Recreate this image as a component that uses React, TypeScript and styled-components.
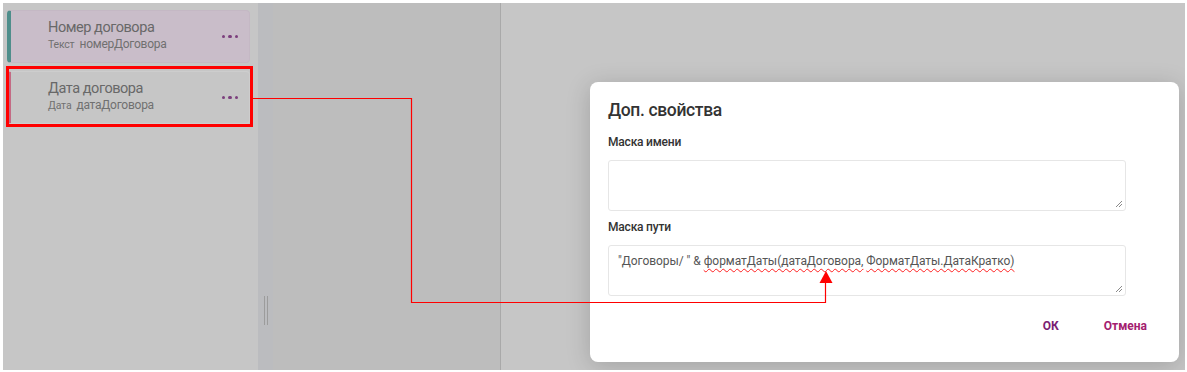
import React from "react";
import styled, { createGlobalStyle } from "styled-components";

const Global = createGlobalStyle`
  html, body { margin: 0; padding: 0; background: #ffffff; }
  body { font-family: Roboto, "Noto Sans", sans-serif; }
  * { box-sizing: border-box; }
`;

const Frame = styled.div`
  width: 1187px;
  height: 372px;
  padding: 3px 2px 2px 3px;
  background: #ffffff;
`;

const Workspace = styled.div`
  position: relative;
  display: flex;
  height: 100%;
  overflow: hidden;
`;

const FieldsPanel = styled.div`
  width: 255px;
  background: #c6c6c6;
  padding: 7px 8px 0 4px;
  display: flex;
  flex-direction: column;
  gap: 8px;
`;

const FieldCard = styled.div<{ $accent: string; $filled?: boolean }>`
  height: 53px;
  display: flex;
  align-items: center;
  padding: 0 11px 2px 37px;
  border-radius: 4px;
  border: 1px solid ${(p) => (p.$filled ? "#c4b8c4" : "#cdcdcd")};
  border-left: 4px solid ${(p) => p.$accent};
  background: ${(p) => (p.$filled ? "#c9bdc9" : "#c6c6c6")};
`;

const FieldText = styled.div`
  flex: 1;
  display: flex;
  flex-direction: column;
  gap: 1px;
`;

const FieldTitle = styled.div`
  font-size: 14.5px;
  line-height: 17px;
  letter-spacing: -0.45px;
  color: #686868;
`;

const FieldMeta = styled.div`
  display: flex;
  align-items: baseline;
  gap: 5px;
  line-height: 15px;
  color: #707070;
`;

const FieldType = styled.span`
  font-size: 10.5px;
  letter-spacing: -0.2px;
`;

const FieldName = styled.span`
  font-size: 12px;
  letter-spacing: -0.25px;
`;

const Dots = styled.div`
  display: flex;
  gap: 3px;
  margin-top: 2px;
`;

const Dot = styled.span`
  width: 3.5px;
  height: 3.5px;
  border-radius: 50%;
  background: #7c3f7d;
`;

const Splitter = styled.div`
  width: 15px;
  background: #bbbcbf;
  display: flex;
  justify-content: center;
  padding: 293px 0 0 0;
`;

const Handle = styled.div`
  width: 4px;
  height: 29px;
  border-left: 1px solid #9c9c9c;
  border-right: 1px solid #9c9c9c;
`;

const CanvasPanel = styled.div`
  width: 228px;
  background: #bdbdbd;
  border-right: 1px solid #a9a9a9;
`;

const PropsPanel = styled.div`
  flex: 1;
  background: #c6c6c6;
`;

const Modal = styled.div`
  position: absolute;
  left: 587px;
  top: 79px;
  width: 589px;
  height: 280px;
  background: #ffffff;
  border-radius: 8px;
  box-shadow: 0 4px 24px rgba(0, 0, 0, 0.18);
  padding: 17px 16px 0 18px;
  display: flex;
  flex-direction: column;
`;

const ModalTitle = styled.div`
  font-size: 17.5px;
  line-height: 22px;
  font-weight: 500;
  letter-spacing: -0.35px;
  color: #333333;
`;

const FieldLabel = styled.div<{ $top: number }>`
  margin-top: ${(p) => p.$top}px;
  font-size: 12px;
  line-height: 16px;
  font-weight: 500;
  letter-spacing: -0.2px;
  color: #333333;
`;

const TextBox = styled.div`
  position: relative;
  margin-top: 10px;
  width: 518px;
  height: 51px;
  border: 1px solid #e6e6e6;
  border-radius: 3px;
  padding: 7px 9px;
  font-size: 12px;
  line-height: 16px;
  letter-spacing: -0.05px;
  color: #555555;
`;

const Grip = styled.svg`
  position: absolute;
  right: 2px;
  bottom: 2px;
`;

const Misspelled = styled.span`
  text-decoration: underline wavy #ff2020;
  text-decoration-thickness: 1px;
  text-underline-offset: 3px;
`;

const Actions = styled.div`
  margin-top: 16px;
  display: flex;
  justify-content: flex-end;
  gap: 13px;
`;

const ActionButton = styled.button<{ $color: string }>`
  height: 28px;
  padding: 0 16px;
  border: none;
  background: transparent;
  font-family: inherit;
  font-size: 12px;
  font-weight: 700;
  color: ${(p) => p.$color};
`;

const Annotation = styled.svg`
  position: absolute;
  left: -3px;
  top: -3px;
  pointer-events: none;
`;

function ResizeGrip() {
  return (
    <Grip width="8" height="8" viewBox="0 0 8 8">
      <path d="M7 1 L1 7 M7 4 L4 7" stroke="#8a8a8a" strokeWidth="1" />
    </Grip>
  );
}

function Field({
  title,
  type,
  name,
  accent,
  filled,
}: {
  title: string;
  type: string;
  name: string;
  accent: string;
  filled?: boolean;
}) {
  return (
    <FieldCard $accent={accent} $filled={filled}>
      <FieldText>
        <FieldTitle>{title}</FieldTitle>
        <FieldMeta>
          <FieldType>{type}</FieldType>
          <FieldName>{name}</FieldName>
        </FieldMeta>
      </FieldText>
      <Dots>
        <Dot />
        <Dot />
        <Dot />
      </Dots>
    </FieldCard>
  );
}

export default function App() {
  return (
    <>
      <Global />
      <Frame>
        <Workspace>
          <FieldsPanel>
            <Field title="Номер договора" type="Текст" name="номерДоговора" accent="#4e8e8b" filled />
            <Field title="Дата договора" type="Дата" name="датаДоговора" accent="#c46a84" />
          </FieldsPanel>
          <Splitter>
            <Handle />
          </Splitter>
          <CanvasPanel />
          <PropsPanel />
          <Modal>
            <ModalTitle>Доп. свойства</ModalTitle>
            <FieldLabel $top={13}>Маска имени</FieldLabel>
            <TextBox>
              <ResizeGrip />
            </TextBox>
            <FieldLabel $top={8}>Маска пути</FieldLabel>
            <TextBox>
              "Договоры/ " &amp; <Misspelled>форматДаты(датаДоговора,</Misspelled>{" "}
              <Misspelled>ФорматДаты.ДатаКратко)</Misspelled>
              <ResizeGrip />
            </TextBox>
            <Actions>
              <ActionButton $color="#7b1f74">ОК</ActionButton>
              <ActionButton $color="#a3206f">Отмена</ActionButton>
            </Actions>
          </Modal>
          <Annotation width="1187" height="372" viewBox="0 0 1187 372">
            <rect x="7.5" y="67.5" width="244" height="58" fill="none" stroke="#ff0000" strokeWidth="3" />
            <path d="M251 98.5 H411.5 V302.5 H825.5 V282" fill="none" stroke="#ff0000" strokeWidth="1.2" />
            <path d="M826 271 L832.5 283 L819.5 283 Z" fill="#ff0000" />
          </Annotation>
        </Workspace>
      </Frame>
    </>
  );
}
